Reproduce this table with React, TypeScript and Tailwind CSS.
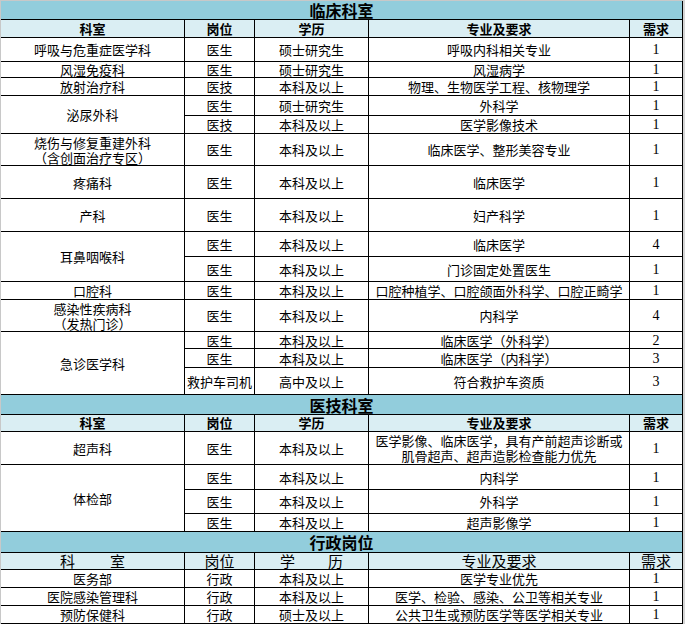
import React from "react";

type Cell = { t: React.ReactNode; span?: number; num?: boolean };

const cjk = "font-['Noto_Sans_CJK_SC',sans-serif]";

function Title({ text }: { text: string }) {
  return (
    <div className="col-span-5 flex items-center justify-center bg-[#92cddc]">
      <span className="text-[16px] font-bold leading-[18px] text-black">{text}</span>
    </div>
  );
}

function Header({ plain }: { plain?: boolean }) {
  const cls = plain ? "text-[15px] font-normal" : "text-[13px] font-bold";
  const base = `flex items-center justify-center bg-[#daeef3] leading-[16px] text-black ${cls}`;
  return (
    <>
      <div className={base}>
        {plain ? (
          <span className="flex gap-[35px]"><span>科</span><span>室</span></span>
        ) : (
          "科室"
        )}
      </div>
      <div className={base}>岗位</div>
      <div className={base}>
        {plain ? (
          <span className="flex gap-[33px]"><span>学</span><span>历</span></span>
        ) : (
          "学历"
        )}
      </div>
      <div className={base}>专业及要求</div>
      <div className={base}>需求</div>
    </>
  );
}

function Row({ cells }: { cells: Cell[] }) {
  return (
    <>
      {cells.map((c, i) => (
        <div
          key={i}
          className={`flex items-center justify-center bg-white text-center leading-[15px] text-black ${
            c.span === 2 ? "row-span-2" : c.span === 3 ? "row-span-3" : ""
          } ${c.num ? "font-['Liberation_Serif',serif] text-[14px]" : "text-[13px]"}`}
        >
          {c.t}
        </div>
      ))}
    </>
  );
}

// two stacked lines, 15px apart as in the sheet
function Two({ a, b }: { a: string; b: string }) {
  return (
    <span className="flex flex-col">
      <span className="leading-[15px]">{a}</span>
      <span className="leading-[15px]">{b}</span>
    </span>
  );
}

const n = (v: string): Cell => ({ t: v, num: true });

const clinical: Cell[][] = [
  [{ t: "呼吸与危重症医学科" }, { t: "医生" }, { t: "硕士研究生" }, { t: "呼吸内科相关专业" }, n("1")],
  [{ t: "风湿免疫科" }, { t: "医生" }, { t: "硕士研究生" }, { t: "风湿病学" }, n("1")],
  [{ t: "放射治疗科" }, { t: "医技" }, { t: "本科及以上" }, { t: "物理、生物医学工程、核物理学" }, n("1")],
  [{ t: "泌尿外科", span: 2 }, { t: "医生" }, { t: "硕士研究生" }, { t: "外科学" }, n("1")],
  [{ t: "医技" }, { t: "本科及以上" }, { t: "医学影像技术" }, n("1")],
  [
    { t: <Two a="烧伤与修复重建外科" b="（含创面治疗专区）" /> },
    { t: "医生" },
    { t: "本科及以上" },
    { t: "临床医学、整形美容专业" },
    n("1"),
  ],
  [{ t: "疼痛科" }, { t: "医生" }, { t: "本科及以上" }, { t: "临床医学" }, n("1")],
  [{ t: "产科" }, { t: "医生" }, { t: "本科及以上" }, { t: "妇产科学" }, n("1")],
  [{ t: "耳鼻咽喉科", span: 2 }, { t: "医生" }, { t: "本科及以上" }, { t: "临床医学" }, n("4")],
  [{ t: "医生" }, { t: "本科及以上" }, { t: "门诊固定处置医生" }, n("1")],
  [{ t: "口腔科" }, { t: "医生" }, { t: "本科及以上" }, { t: "口腔种植学、口腔颌面外科学、口腔正畸学" }, n("1")],
  [
    { t: <Two a="感染性疾病科" b="（发热门诊）" /> },
    { t: "医生" },
    { t: "本科及以上" },
    { t: "内科学" },
    n("4"),
  ],
  [{ t: "急诊医学科", span: 3 }, { t: "医生" }, { t: "本科及以上" }, { t: "临床医学（外科学）" }, n("2")],
  [{ t: "医生" }, { t: "本科及以上" }, { t: "临床医学（内科学）" }, n("3")],
  [{ t: "救护车司机" }, { t: "高中及以上" }, { t: "符合救护车资质" }, n("3")],
];

const medtech: Cell[][] = [
  [
    { t: "超声科" },
    { t: "医生" },
    { t: "本科及以上" },
    { t: <Two a="医学影像、临床医学，具有产前超声诊断或" b="肌骨超声、超声造影检查能力优先" /> },
    n("1"),
  ],
  [{ t: "体检部", span: 3 }, { t: "医生" }, { t: "本科及以上" }, { t: "内科学" }, n("1")],
  [{ t: "医生" }, { t: "本科及以上" }, { t: "外科学" }, n("1")],
  [{ t: "医生" }, { t: "本科及以上" }, { t: "超声影像学" }, n("1")],
];

const admin: Cell[][] = [
  [{ t: "医务部" }, { t: "行政" }, { t: "本科及以上" }, { t: "医学专业优先" }, n("1")],
  [{ t: "医院感染管理科" }, { t: "行政" }, { t: "本科及以上" }, { t: "医学、检验、感染、公卫等相关专业" }, n("1")],
  [{ t: "预防保健科" }, { t: "行政" }, { t: "硕士及以上" }, { t: "公共卫生或预防医学等医学相关专业" }, n("1")],
];

export default function App() {
  return (
    <div className={`h-[624px] w-[685px] bg-[#d4d4d4] ${cjk}`}>
      <div className="w-[683px] border-l border-t border-[#c8c8c8]">
        <div className="grid grid-cols-[183px_69px_113px_260px_52px] grid-rows-[18px_17px_23px_15px_17px_19px_17px_31px_32px_32px_24px_24px_17px_31px_16px_18px_26px_19px_16px_32px_24px_23px_17px_20px_16px_17px_17px_17px] gap-px bg-black pb-px pr-px">
          <Title text="临床科室" />
          <Header />
          {clinical.map((r, i) => (
            <Row key={`c${i}`} cells={r} />
          ))}
          <Title text="医技科室" />
          <Header />
          {medtech.map((r, i) => (
            <Row key={`m${i}`} cells={r} />
          ))}
          <Title text="行政岗位" />
          <Header plain />
          {admin.map((r, i) => (
            <Row key={`a${i}`} cells={r} />
          ))}
        </div>
      </div>
    </div>
  );
}
